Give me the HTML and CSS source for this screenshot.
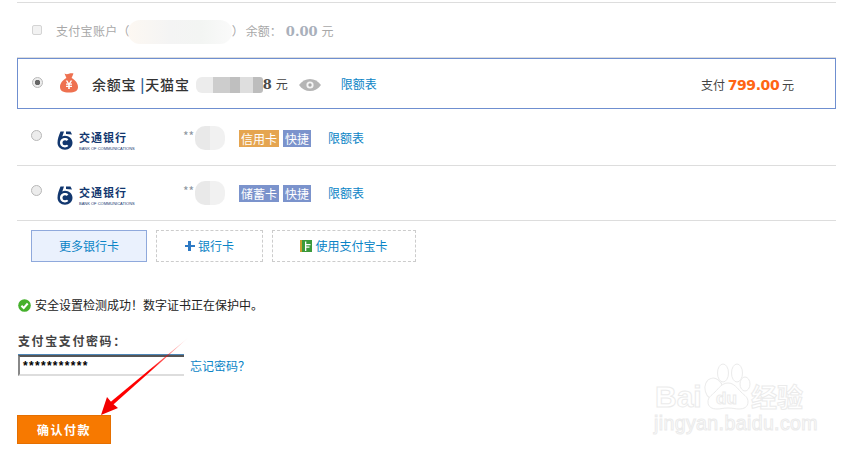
FILE: index.html
```html
<!DOCTYPE html>
<html lang="zh-CN">
<head>
<meta charset="utf-8">
<title>确认付款</title>
<link rel="stylesheet" href="styles.css">
</head>
<body>
<main class="page">
  <section class="channels">
    <div class="row row-balance">
      <span class="check"></span>
      <span class="muted account">支付宝账户（</span>
      <span class="blob blob-account"></span>
      <span class="muted">）</span>
      <span class="muted balance-label">余额：</span>
      <b class="balance">0.00</b>
      <span class="muted balance-unit">元</span>
    </div>
    <div class="row row-selected">
      <span class="radio radio-on"></span>
      <svg class="bag" viewBox="0 0 20 20" width="20" height="20">
        <path fill="#ee7150" d="M5.500 0.500c1.500.8 3 .8 4.500.2 1.500-.6 3-.6 4.500-.2L12.600 5c3.600 1.800 6.400 5.200 6.400 9 0 3.800-3 5.500-9 5.500S1 17.800 1 14c0-3.800 2.800-7.200 6.400-9z"/>
        <path fill="#fff" d="M6.700 7.600h1.700L10 10.300l1.600-2.700h1.700l-2 3h1.700v1.200h-2.200v1h2.200V14h-2.200v2H9.200v-2H7v-1.200h2.200v-1H7v-1.200h1.700z"/>
      </svg>
      <span class="fund">余额宝 <span class="fund-bar">|</span>天猫宝</span>
      <span class="blob blob-fund"></span>
      <b class="fund-num">8</b>
      <span class="fund-unit">元</span>
      <svg class="eye" viewBox="0 0 22 12" width="22" height="12">
        <path fill="#b5b5b5" d="M0 6c3-4 6.500-6 11-6s8 2 11 6c-3 4-6.500 6-11 6S3 10 0 6z"/>
        <circle cx="11" cy="6" r="3.600" fill="#f4f4f4"/>
        <circle cx="11" cy="6" r="1.700" fill="#a8a8a8"/>
      </svg>
      <a class="link limit-fund">限额表</a>
      <span class="pay">支付 <b class="amount">799.00</b> 元</span>
    </div>
    <div class="row row-bank">
      <span class="radio"></span>
      <span class="logo">
        <svg viewBox="0 0 16 19" width="16" height="19">
          <path fill="#12376f" d="M3.500 0.500H7L5.300 5.400C6.200 5 7 4.800 8 4.800c4.200 0 7.500 3 7.500 6.900S12.200 18.700 8 18.700 0.500 15.600 0.500 11.700C0.500 8 1.800 4.500 3.500.5zM8 7C5.300 7 3 9.100 3 11.700s2.300 4.700 5 4.700c1.300 0 2.500-.5 3.400-1.300L8 11.700l3.400-3.400C10.500 7.500 9.300 7 8 7z"/>
          <circle cx="8" cy="11.700" r="2.500" fill="#12376f"/>
          <path fill="#12376f" d="M9 .5h4.500l1.500 3-6-.5z"/>
        </svg>
        <span class="logo-text"><b class="logo-cn">交通银行</b><span class="logo-en">BANK OF COMMUNICATIONS</span></span>
      </span>
      <span class="stars">**</span>
      <span class="blob blob-card"></span>
      <span class="tag tag-orange">信用卡</span>
      <span class="tag tag-blue">快捷</span>
      <a class="link limit">限额表</a>
    </div>
    <div class="row row-bank">
      <span class="radio"></span>
      <span class="logo">
        <svg viewBox="0 0 16 19" width="16" height="19">
          <path fill="#12376f" d="M3.500 0.500H7L5.300 5.400C6.200 5 7 4.800 8 4.800c4.200 0 7.500 3 7.500 6.900S12.200 18.700 8 18.700 0.500 15.600 0.500 11.700C0.500 8 1.800 4.500 3.500.5zM8 7C5.300 7 3 9.100 3 11.700s2.300 4.700 5 4.700c1.300 0 2.500-.5 3.400-1.300L8 11.700l3.400-3.400C10.500 7.500 9.300 7 8 7z"/>
          <circle cx="8" cy="11.700" r="2.500" fill="#12376f"/>
          <path fill="#12376f" d="M9 .5h4.500l1.500 3-6-.5z"/>
        </svg>
        <span class="logo-text"><b class="logo-cn">交通银行</b><span class="logo-en">BANK OF COMMUNICATIONS</span></span>
      </span>
      <span class="stars">**</span>
      <span class="blob blob-card"></span>
      <span class="tag tag-savings">储蓄卡</span>
      <span class="tag tag-blue">快捷</span>
      <a class="link limit">限额表</a>
    </div>
  </section>

  <section class="actions">
    <a class="action action-more">更多银行卡</a>
    <a class="action action-add"><span class="plus"></span>银行卡</a>
    <a class="action action-card">
      <svg viewBox="0 0 12 12" width="12" height="12">
        <rect width="12" height="12" fill="#3d9a3a"/>
        <rect width="2" height="12" fill="#c9a030"/>
        <path fill="#fff" d="M5 1.500h1.300v2.500H10.500v1.200H6.300V6.500H9.500v1.200H6.300V11H5z"/>
      </svg>使用支付宝卡</a>
  </section>

  <p class="secure">
    <svg viewBox="0 0 13 13" width="13" height="13">
      <circle cx="6.500" cy="6.500" r="6.300" fill="#45b02c"/>
      <path d="M3.400 6.700 5.700 9 9.700 4.500" fill="none" stroke="#fff" stroke-width="2"/>
    </svg>
    <span>安全设置检测成功！数字证书正在保护中。</span>
  </p>

  <form class="password">
    <label class="pw-label">支付宝支付密码：</label>
    <div class="pw-row">
      <span class="pw-input">***********</span>
      <a class="link forgot">忘记密码？</a>
    </div>
    <button class="submit" type="button">确认付款</button>
  </form>
</main>

<svg class="arrow" viewBox="0 0 853 453" width="853" height="453">
  <defs>
    <linearGradient id="fade" gradientUnits="userSpaceOnUse" x1="189" y1="337" x2="112" y2="404">
      <stop offset="0" stop-color="#ff0000" stop-opacity="0"/>
      <stop offset=".5" stop-color="#ff0000"/>
    </linearGradient>
  </defs>
  <path d="M189 337 110 407.500 107.500 404.500z" fill="url(#fade)"/>
  <path fill="#f20000" d="M101 415 107 397 112 403 118 408z"/>
</svg>

<div class="watermark">
  <svg viewBox="0 0 213 93" width="213" height="93">
    <g fill="#fff" stroke="#ebebeb" stroke-width="1">
      <ellipse cx="74" cy="29" rx="9" ry="11" transform="rotate(-15 74 29)"/>
      <ellipse cx="83" cy="13" rx="5.500" ry="9"/>
      <ellipse cx="97" cy="13" rx="5.500" ry="9"/>
      <ellipse cx="105" cy="24" rx="5" ry="7"/>
      <path d="M88 23c6 0 9 5 13 9s7 5 7 10c0 5-4 7-9 7-4 0-6-1-11-1s-7 1-11 1c-5 0-9-2-9-7s3-6 7-10 7-9 13-9z"/>
    </g>
    <text class="wm-bai" x="15" y="47">Bai</text>
    <text class="wm-du" x="76" y="44">du</text>
    <text class="wm-cn" x="111" y="47">经验</text>
    <text class="wm-url" x="14" y="70">jingyan.baidu.com</text>
  </svg>
</div>
</body>
</html>
```

FILE: styles.css
```css
* { box-sizing: border-box; }

html, body {
  margin: 0;
  height: 453px;
  overflow: hidden;
  background: #fff;
}

body {
  position: relative;
  font: 12px/1.2 "Noto Sans CJK SC", "Liberation Sans", sans-serif;
  color: #444;
}

a { color: #0a84c6; text-decoration: none; }

.page {
  width: 853px;
  padding: 2px 17px 0;
}

.channels { width: 819px; }

.row {
  display: flex;
  align-items: center;
  padding-left: 14px;
}

.row-balance {
  height: 56px;
  border-top: 1px solid #ddd;
  padding-top: 2px;
}

.row-selected {
  height: 51px;
  border: 1px solid #6f8fd0;
  box-shadow: 0 -1px 0 #ddd;
  padding-left: 14px;
  padding-top: 2px;
  margin-bottom: 2px;
}

.row-bank {
  height: 55px;
  border-bottom: 1px solid #ddd;
  padding-bottom: 2px;
}

.check {
  width: 10px;
  height: 10px;
  margin-right: 14px;
  border: 1px solid #d4d4d4;
  border-radius: 2px;
  background: #f2f2f2;
  margin-top: -4px;
  margin-left: 1px;
}

.muted { color: #a8a8a8; }
.account { letter-spacing: .3px; }

.blob {
  display: block;
  flex: none;
  background: #eee;
}

.blob-account {
  width: 104px;
  height: 24px;
  margin-left: -2px;
  border-radius: 12px;
  background: linear-gradient(90deg, #fdf8f2, #f4f4f4 40%, #f3f5f3 70%, #fafafa);
}

.balance-label { margin-left: 2px; }

.balance {
  margin: 0 4px;
  font: bold 13px "DejaVu Serif", "Liberation Serif", serif;
  color: #a9b0bb;
}

.radio {
  flex: none;
  width: 11px;
  height: 11px;
  margin: -4px 15px 0 0;
  border: 1px solid #b8b8b8;
  border-radius: 50%;
  background: #ececec;
}

.radio-on { background: radial-gradient(circle, #666 0 2.500px, #ececec 3px); }

.row-selected .radio { margin: -4px 16px 0 0; }

.bag { flex: none; margin-top: -4px; }

.fund {
  margin-left: 13px;
  font-size: 14px;
  font-weight: 500;
  letter-spacing: .8px;
  color: #333;
  white-space: nowrap;
}

.fund-bar { color: #2f5f9c; font-weight: 700; }

.blob-fund {
  width: 67px;
  height: 16px;
  margin-left: 6px;
  border-radius: 6px 3px 3px 6px;
  background: linear-gradient(90deg, #ececec 0 25%, #cdcdcd 25% 50%, #bfbfbf 50% 65%, #dedede 65% 85%, #bdbdbd 85%);
}

.fund-num { font: bold 13px "DejaVu Serif", serif; color: #4a4a4a; }
.fund-unit { margin-left: 4px; }
.eye { flex: none; margin-left: 11px; }
.limit-fund { margin-left: 20px; }

.pay {
  margin-left: auto;
  margin-right: 41px;
  white-space: nowrap;
}

.amount {
  font: bold 14px "DejaVu Sans", sans-serif;
  color: #ff6414;
  letter-spacing: -.4px;
}

.logo {
  flex: none;
  display: flex;
  align-items: center;
  gap: 6px;
  width: 126px;
  margin-top: 7px;
}

.logo-text { display: flex; flex-direction: column; }

.logo-cn {
  font: bold 11px/12px "Noto Sans CJK SC", serif;
  color: #12376f;
  letter-spacing: 1px;
}

.logo-en {
  margin-top: 3px;
  font: 4px/5px "Liberation Sans", sans-serif;
  color: #12376f;
  white-space: nowrap;
}

.stars { color: #8b95a0; width: 12px; margin-top: -2px; }

.blob-card {
  width: 30px;
  height: 24px;
  border-radius: 10px;
  background: linear-gradient(90deg, #e9e9e9 50%, #f1f1f1 50%);
  margin-top: 2px;
}

.tag {
  flex: none;
  height: 17px;
  margin-top: 2px;
  padding: 0 2px;
  line-height: 17px;
  color: #fff;
  white-space: nowrap;
}

.tag-orange { background: #e5a550; margin-left: 14px; }
.tag-savings { background: #7b93cc; margin-left: 14px; }
.tag-blue { background: #7b93cc; margin-left: 4px; }
.limit { margin-left: 17px; margin-top: 2px; }

.actions {
  display: flex;
  gap: 9px;
  padding: 9px 0 0 14px;
}

.action {
  display: flex;
  align-items: center;
  justify-content: center;
  height: 32px;
  gap: 3px;
  border: 1px dashed #ccc;
}

.action-more {
  width: 116px;
  border: 1px solid #8fa9dc;
  background: #eaf1fd;
}

.action-add { width: 107px; }
.action-card { width: 144px; }

.plus {
  width: 10px;
  height: 10px;
  background:
    linear-gradient(#2d79c4, #2d79c4) center / 100% 2px no-repeat,
    linear-gradient(#2d79c4, #2d79c4) center / 3px 100% no-repeat;
}

.secure {
  display: flex;
  align-items: center;
  gap: 4px;
  margin: 36px 0 0 1px;
  color: #222;
}

.password { display: block; margin: 22px 0 0 1px; }

.pw-label {
  display: block;
  font-weight: 700;
  color: #444;
  letter-spacing: 1.600px;
}

.pw-row {
  display: flex;
  align-items: flex-start;
  margin-top: 6px;
}

.pw-input {
  width: 166px;
  height: 21px;
  padding: 3px 0 0 3px;
  border-style: solid;
  border-width: 2px 0 2px 2px;
  border-color: #555 #ddd #ddd #888;
  box-shadow: 0 -1px 0 #4f87b8;
  font: bold 12px/12px "Liberation Sans", sans-serif;
  color: #000;
  letter-spacing: 1.300px;
}

.forgot { margin: 4px 0 0 6px; }

.submit {
  display: block;
  width: 94px;
  height: 29px;
  margin: 39px 0 0 -1px;
  border: 1px solid #e56f00;
  background: #f77900;
  color: #fff;
  font: bold 12px "Noto Sans CJK SC", sans-serif;
  letter-spacing: 1.500px;
}

.arrow {
  position: absolute;
  left: 0;
  top: 0;
  pointer-events: none;
}

.watermark {
  position: absolute;
  left: 640px;
  top: 360px;
  width: 213px;
  height: 93px;
}

.watermark text {
  fill: #fff;
  stroke: #ebebeb;
  stroke-width: 1px;
}

.wm-bai { font: bold 30px "Liberation Sans", sans-serif; }
.wm-du { font: bold 17px "Liberation Sans", sans-serif; }
.wm-cn { font: bold 26px "Noto Sans CJK SC", sans-serif; }
.wm-url { font: 19.500px "Liberation Sans", sans-serif; letter-spacing: .4px; }
```
